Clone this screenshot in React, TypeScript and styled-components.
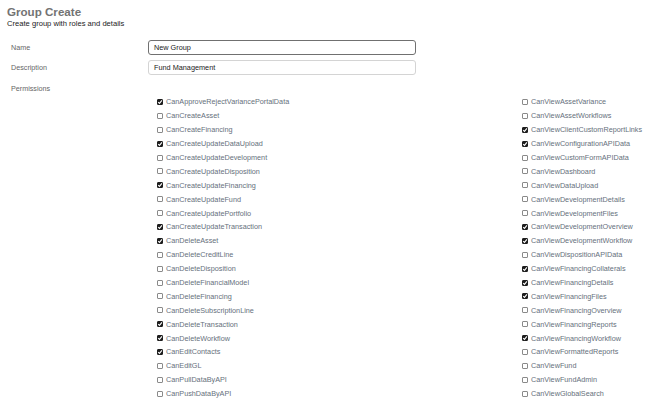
import React from "react";
import styled, { createGlobalStyle } from "styled-components";

const GlobalStyle = createGlobalStyle`
  html, body {
    margin: 0;
    padding: 0;
    background: #ffffff;
  }
  body {
    font-family: "Liberation Sans", Arial, sans-serif;
    color: #333;
    -webkit-font-smoothing: antialiased;
  }
`;

const left = [
  ["CanApproveRejectVariancePortalData", true],
  ["CanCreateAsset", false],
  ["CanCreateFinancing", false],
  ["CanCreateUpdateDataUpload", true],
  ["CanCreateUpdateDevelopment", false],
  ["CanCreateUpdateDisposition", false],
  ["CanCreateUpdateFinancing", true],
  ["CanCreateUpdateFund", false],
  ["CanCreateUpdatePortfolio", false],
  ["CanCreateUpdateTransaction", true],
  ["CanDeleteAsset", true],
  ["CanDeleteCreditLine", false],
  ["CanDeleteDisposition", false],
  ["CanDeleteFinancialModel", false],
  ["CanDeleteFinancing", false],
  ["CanDeleteSubscriptionLine", false],
  ["CanDeleteTransaction", true],
  ["CanDeleteWorkflow", true],
  ["CanEditContacts", true],
  ["CanEditGL", false],
  ["CanPullDataByAPI", false],
  ["CanPushDataByAPI", false],
] as [string, boolean][];

const right = [
  ["CanViewAssetVariance", false],
  ["CanViewAssetWorkflows", false],
  ["CanViewClientCustomReportLinks", true],
  ["CanViewConfigurationAPIData", true],
  ["CanViewCustomFormAPIData", false],
  ["CanViewDashboard", false],
  ["CanViewDataUpload", false],
  ["CanViewDevelopmentDetails", false],
  ["CanViewDevelopmentFiles", false],
  ["CanViewDevelopmentOverview", true],
  ["CanViewDevelopmentWorkflow", true],
  ["CanViewDispositionAPIData", false],
  ["CanViewFinancingCollaterals", true],
  ["CanViewFinancingDetails", true],
  ["CanViewFinancingFiles", true],
  ["CanViewFinancingOverview", false],
  ["CanViewFinancingReports", false],
  ["CanViewFinancingWorkflow", true],
  ["CanViewFormattedReports", false],
  ["CanViewFund", false],
  ["CanViewFundAdmin", false],
  ["CanViewGlobalSearch", false],
] as [string, boolean][];

export default function App() {
  return (
    <Page>
      <GlobalStyle />
      <Header>
        <Title>Group Create</Title>
        <Subtitle>Create group with roles and details</Subtitle>
      </Header>

      <Form>
        <FieldRow>
          <Label>Name</Label>
          <TextInput $focused>New Group</TextInput>
        </FieldRow>
        <FieldRow>
          <Label>Description</Label>
          <TextInput>Fund Management</TextInput>
        </FieldRow>
        <PermRow>
          <Label>Permissions</Label>
        </PermRow>
        <PermGrid>
          <PermColumn>
            {left.map(([name, on]) => (
              <Perm key={name} name={name} checked={on} />
            ))}
          </PermColumn>
          <PermColumn>
            {right.map(([name, on]) => (
              <Perm key={name} name={name} checked={on} />
            ))}
          </PermColumn>
        </PermGrid>
      </Form>
    </Page>
  );
}

const Perm = ({ name, checked }: { name: string; checked: boolean }) => (
  <PermItem>
    <Box $checked={checked}>
      {checked && (
        <svg width="6" height="6" viewBox="0 0 6 6">
          <path d="M1.2 3.1 L2.5 4.4 L4.9 1.4" fill="none" stroke="#fff" strokeWidth="1.1" />
        </svg>
      )}
    </Box>
    <PermText>{name}</PermText>
  </PermItem>
);

const Page = styled.div`
  padding: 5px 7px 0;
  width: 656px;
  height: 399px;
  overflow: hidden;
  box-sizing: border-box;
`;

const Header = styled.header`
  display: flex;
  flex-direction: column;
`;

const Title = styled.h1`
  margin: 0;
  font-size: 11.6px;
  line-height: 14px;
  font-weight: 700;
  color: #737373;
`;

const Subtitle = styled.p`
  margin: 0;
  font-size: 7.6px;
  line-height: 10px;
  color: #222;
`;

const Form = styled.div`
  margin-top: 11px;
  display: flex;
  flex-direction: column;
`;

const FieldRow = styled.div`
  display: flex;
  align-items: center;
  margin-bottom: 5px;
`;

const Label = styled.div`
  width: 137px;
  padding-left: 4px;
  font-size: 7.2px;
  color: #666;
`;

const TextInput = styled.div<{ $focused?: boolean }>`
  width: 268px;
  height: 15px;
  box-sizing: border-box;
  border: 1px solid ${(p) => (p.$focused ? "#707070" : "#d4d4d4")};
  border-radius: 3px;
  padding: 0 5px;
  display: flex;
  align-items: center;
  font-size: 7.3px;
  color: #222;
`;

const PermRow = styled.div`
  display: flex;
  align-items: center;
  height: 14px;
  margin-top: 1px;
`;

const PermGrid = styled.div`
  display: grid;
  grid-template-columns: 365px 1fr;
  padding-left: 150px;
`;

const PermColumn = styled.div`
  display: flex;
  flex-direction: column;
`;

const PermItem = styled.div`
  display: flex;
  align-items: center;
  gap: 3px;
  height: 13.9px;
`;

const Box = styled.span<{ $checked: boolean }>`
  width: 6px;
  height: 6px;
  box-sizing: border-box;
  border: 1px solid ${(p) => (p.$checked ? "#1e1e1e" : "#8a8a8a")};
  background: ${(p) => (p.$checked ? "#1e1e1e" : "#fff")};
  border-radius: 1px;
  display: inline-flex;
  align-items: center;
  justify-content: center;
  flex-shrink: 0;
  svg {
    display: block;
    margin: -1px;
  }
`;

const PermText = styled.span`
  font-size: 7.25px;
  color: #66707c;
  white-space: nowrap;
`;
